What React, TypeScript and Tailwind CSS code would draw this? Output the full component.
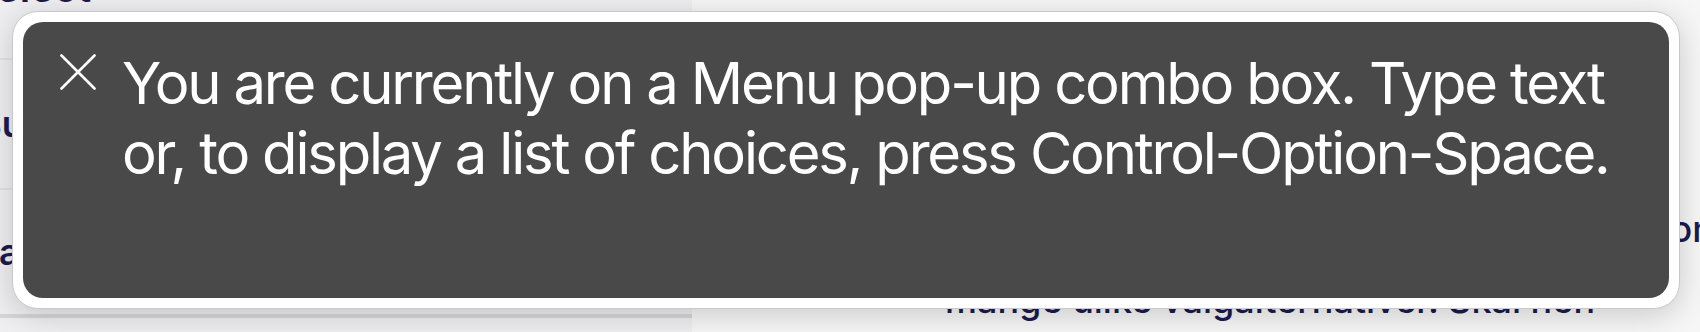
function PageBehind() {
  return (
    <div className="flex h-full w-full">
      <div className="flex w-[692px] flex-col bg-[#efeff1]">
        <div className="h-[60px] border-b-2 border-[#e2e2e4]">
          <span className="-mt-[32px] -ml-[30px] block text-[40px] font-semibold leading-[40px] text-[#1b1a4f]">Select</span>
        </div>
        <div className="flex h-[130px] items-center border-b-2 border-[#e2e2e4]">
          <span className="-ml-[22px] text-[36px] font-semibold text-[#1b1a4f]">Bu</span>
        </div>
        <div className="flex h-[128px] items-center border-b-4 border-[#d6d6d8]">
          <span className="-ml-[24px] text-[36px] font-semibold text-[#1b1a4f]">Pa</span>
        </div>
      </div>
      <div className="flex flex-1 flex-col overflow-hidden bg-[#f6f6f6] pl-[253px] pt-[194px]">
        <p className="whitespace-nowrap text-[36px] font-medium leading-[71px] text-[#1b1a4f]">
          Her kan du skrive inn tekst eller velge mellom de
        </p>
        <p className="whitespace-nowrap text-[36px] font-medium leading-[71px] text-[#1b1a4f]">
          mange ulike valgalternativer. Skal hen
        </p>
      </div>
    </div>
  );
}

function CloseIcon() {
  return (
    <svg viewBox="0 0 36 36" className="mt-[6px] h-[36px] w-[36px] shrink-0" fill="none">
      <path d="M1.5 1.5 L34.5 34.5 M34.5 1.5 L1.5 34.5" stroke="white" strokeWidth="2.6" strokeLinecap="round" />
    </svg>
  );
}

export default function App() {
  return (
    <div
      className="relative h-[332px] w-[1700px] overflow-hidden bg-[#f6f6f6]"
      style={{ fontFamily: "Inter, 'Noto Sans', sans-serif" }}
    >
      <PageBehind />
      <div className="absolute left-[12px] top-[11px] h-[298px] w-[1668px] rounded-[26px] border border-[#c9c9c9] bg-white p-[10px] shadow-[0_6px_30px_rgba(0,0,0,0.18)]">
        <div className="flex h-full gap-[26px] rounded-[20px] bg-[#494949] pl-[37px] pt-[26px] pr-[20px]">
          <CloseIcon />
          <p className="whitespace-nowrap text-[58px] leading-[70px] text-white tracking-[-2.2px]">
            You are currently on a Menu pop-up combo box. Type text
            <br />
            or, to display a list of choices, press Control-Option-Space.
          </p>
        </div>
      </div>
    </div>
  );
}
